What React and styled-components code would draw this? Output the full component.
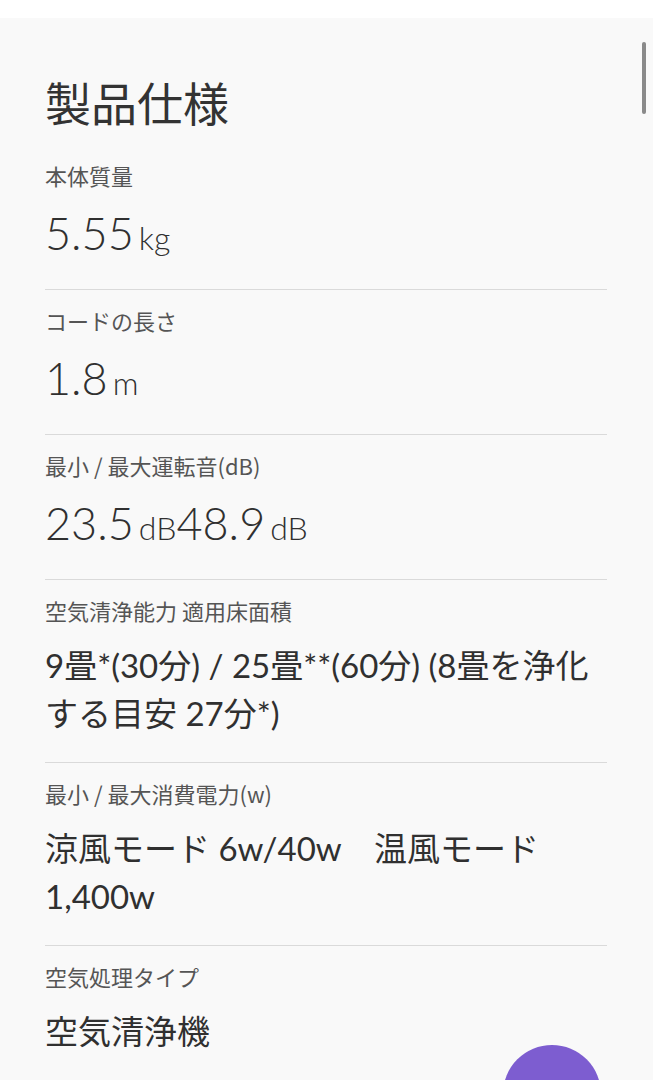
import React from 'react';
import styled, {createGlobalStyle} from "styled-components";

const GlobalStyle = createGlobalStyle`
  html, body {
    margin: 0;
    padding: 0;
    background: #ffffff;
  }
  body {
    font-family: "Noto Sans CJK JP", sans-serif;
    color: #333;
  }
`;

const Page = styled.div`
  padding-top: 18px;
`;

const Panel = styled.section`
  background: #f9f9f9;
  padding: 55px 46px 0 45px;
  height: 1062px;
  box-sizing: border-box;
  overflow: hidden;
`;

const Title = styled.h1`
  margin: 0 0 16px;
  font-family: "Noto Sans CJK JP", sans-serif;
  font-size: 46px;
  font-weight: 400;
  line-height: 56px;
  color: #333;
`;

const SpecList = styled.dl`
  margin: 0;
`;

const SpecRow = styled.div`
  padding: 15px 0 25px;
  border-bottom: ${({$last}) => $last ? 'none' : '1px solid #dadada'};
`;

const Label = styled.dt`
  font-family: "Noto Sans CJK JP", sans-serif;
  font-size: 22px;
  line-height: 30px;
  color: #555;
`;

const Value = styled.dd`
  margin: 16px 0 0;
  font-family: "Lato", "Noto Sans CJK JP", sans-serif;
  color: #303030;
  font-size: ${({$numeric}) => $numeric ? '45px' : '33px'};
  font-weight: ${({$numeric}) => $numeric ? 300 : 400};
  line-height: ${({$numeric}) => $numeric ? '54px' : '48px'};
  padding-bottom: ${({$numeric}) => $numeric ? '4px' : '0'};
`;

const Line = styled.span`
  display: block;
  white-space: nowrap;
`;

const Unit = styled.span`
  font-size: 32px;
  line-height: 1;
  margin-left: 5px;
`;

const Scrollbar = styled.div`
  position: fixed;
  top: 42px;
  right: 7px;
  width: 4px;
  height: 72px;
  border-radius: 2px;
  background: #8a8a8a;
`;

const Fab = styled.button`
  position: fixed;
  top: 1045px;
  right: 52px;
  width: 98px;
  height: 98px;
  border: none;
  border-radius: 50%;
  background: #7d5dd0;
  padding: 0;
`;

const specs = [
    {label: '本体質量', numbers: [['5.55', 'kg']]},
    {label: 'コードの長さ', numbers: [['1.8', 'm']]},
    {label: '最小 / 最大運転音(dB)', numbers: [['23.5', 'dB'], ['48.9', 'dB']]},
    {label: '空気清浄能力 適用床面積', lines: ['9畳*(30分) / 25畳**(60分) (8畳を浄化', 'する目安 27分*)']},
    {label: '最小 / 最大消費電力(w)', lines: ['涼風モード 6w/40w　温風モード', '1,400w']},
    {label: '空気処理タイプ', lines: ['空気清浄機']},
];

const App = () => {
    return (
        <>
            <GlobalStyle/>
            <Page>
                <Panel>
                    <Title>製品仕様</Title>
                    <SpecList>
                        {specs.map((item, i) => (
                            <SpecRow key={item.label} $last={i === specs.length - 1}>
                                <Label>{item.label}</Label>
                                {item.numbers ? (
                                    <Value $numeric>
                                        {item.numbers.map(([num, unit], j) => (
                                            <React.Fragment key={j}>{num}<Unit>{unit}</Unit></React.Fragment>
                                        ))}
                                    </Value>
                                ) : (
                                    <Value>
                                        {item.lines.map((line) => <Line key={line}>{line}</Line>)}
                                    </Value>
                                )}
                            </SpecRow>
                        ))}
                    </SpecList>
                </Panel>
            </Page>
            <Scrollbar/>
            <Fab type="button" aria-label="chat"/>
        </>
    );
};

export default App;
